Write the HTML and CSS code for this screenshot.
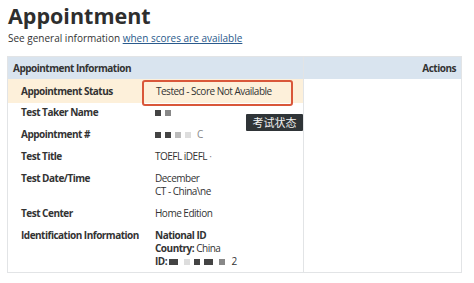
FILE: index.html
```html
<!DOCTYPE html>
<html>
<head>
<meta charset="utf-8">
<link rel="stylesheet" href="styles.css">
</head>
<body>
<h1 class="title">Appointment</h1>
<p class="sub">See general information <a href="#">when scores are available</a></p>
<div class="panel">
  <div class="info">
    <div class="head">Appointment Information</div>
    <div class="row status">
      <div class="label">Appointment Status</div>
      <div class="value"><span class="statusbox">Tested - Score Not Available</span></div>
    </div>
    <div class="row first">
      <div class="label">Test Taker Name</div>
      <div class="value"><span class="blk d"></span><span class="blk m"></span></div>
    </div>
    <div class="row">
      <div class="label">Appointment #</div>
      <div class="value"><span class="blk d"></span><span class="blk d"></span><span class="blk l"></span><span class="blk xl"></span> <span class="faint">C</span></div>
    </div>
    <div class="row">
      <div class="label">Test Title</div>
      <div class="value">TOEFL iDEFL <span class="faint">·</span></div>
    </div>
    <div class="row">
      <div class="label">Test Date/Time</div>
      <div class="value">December<br>CT - China\ne</div>
    </div>
    <div class="row">
      <div class="label">Test Center</div>
      <div class="value">Home Edition</div>
    </div>
    <div class="row">
      <div class="label">Identification Information</div>
      <div class="value"><b>National ID</b><br><b>Country:</b> China<br><b>ID:</b> <span class="blk w d"></span> <span class="blk xl"></span><span class="blk d"></span><span class="blk w d"></span> <span class="blk m"></span> 2</div>
    </div>
  </div>
  <div class="actions">
    <div class="head right">Actions</div>
  </div>
  <div class="tip">考试状态</div>
</div>
</body>
</html>
```
FILE: styles.css
```css
body {
  margin: 0;
  padding: 4px 7px 0 7px;
  font-family: "Open Sans", "Noto Sans CJK SC", sans-serif;
  color: #333;
  background: #fff;
}
.title {
  margin: 0 0 0 1px;
  font-size: 21.5px;
  font-weight: 700;
  line-height: 24px;
  color: #2e2e2e;
}
.sub {
  margin: 3px 0 0 1px;
  font-size: 10px;
  line-height: 14px;
  color: #333;
}
.sub a {
  color: #2a5a8c;
}
.panel {
  position: relative;
  margin-top: 11px;
  width: 455px;
  border: 1px solid #e2e4e6;
  box-sizing: border-box;
  display: grid;
  grid-template-columns: 296px 1fr;
  letter-spacing: -0.5px;
}
.info {
  border-right: 1px solid #e2e4e6;
}
.head {
  background: #d9e4ef;
  height: 22px;
  line-height: 22px;
  font-size: 10px;
  font-weight: 700;
  padding-left: 5px;
  color: #333;
}
.head.right {
  text-align: right;
  padding: 0 5px 0 0;
}
.row {
  display: grid;
  grid-template-columns: 134px 1fr;
  font-size: 10px;
  line-height: 13px;
  padding: 5px 0 4px 13px;
}
.row.first {
  padding-top: 3px;
}
.row .label {
  font-weight: 700;
}
.row.status {
  background: #fdf0da;
  padding: 0 0 0 13px;
  height: 24px;
  align-items: start;
}
.row.status .label {
  line-height: 24px;
}
.statusbox {
  display: block;
  margin-left: -13px;
  margin-top: 1px;
  border: 2px solid #d9573a;
  border-radius: 3px;
  width: 151px;
  height: 26px;
  box-sizing: border-box;
  line-height: 19px;
  padding-left: 12px;
  font-size: 10px;
  position: relative;
}
.blk {
  display: inline-block;
  width: 6px;
  height: 6px;
  margin-right: 4px;
  vertical-align: middle;
  background: #444;
}
.blk.m { background: #888; }
.blk.l { background: #bbb; }
.blk.xl { background: #ddd; }
.blk.w { width: 9px; }
.faint { color: #888; }
.tip {
  position: absolute;
  left: 238px;
  top: 57px;
  width: 57px;
  height: 17px;
  background: #2f3437;
  color: #f0f0f0;
  font-size: 11px;
  line-height: 17px;
  text-align: center;
  border-radius: 1px;
  letter-spacing: 0;
}
```
